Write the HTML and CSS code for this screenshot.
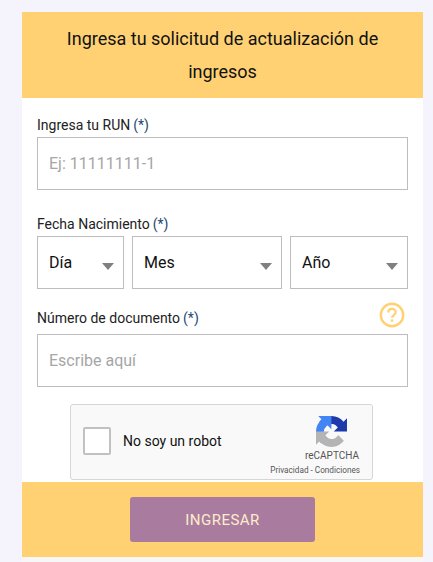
FILE: index.html
```html
<!DOCTYPE html>
<html lang="es">
<head>
    <meta charset="UTF-8">
    <meta name="viewport" content="width=device-width, initial-scale=1.0">
    <title>Solicitud de actualización de ingresos</title>
    <link rel="stylesheet" href="styles.css">
</head>
<body>
    <div class="card">
        <header class="card-header">
            <h1>Ingresa tu solicitud de actualización de ingresos</h1>
        </header>
        <form class="form">
            <div class="field field-run">
                <label for="run">Ingresa tu RUN<span class="req">(*)</span></label>
                <input type="text" id="run" placeholder="Ej: 11111111-1">
            </div>
            <div class="field field-date">
                <label for="dia">Fecha Nacimiento<span class="req">(*)</span></label>
                <div class="date-row">
                    <div class="select select-day">
                        <select id="dia"><option>Día</option></select>
                    </div>
                    <div class="select select-month">
                        <select id="mes"><option>Mes</option></select>
                    </div>
                    <div class="select select-year">
                        <select id="anio"><option>Año</option></select>
                    </div>
                </div>
            </div>
            <div class="field field-doc">
                <div class="label-row">
                    <label for="doc">Número de documento<span class="req">(*)</span></label>
                    <svg class="help" width="26" height="26" viewBox="0 0 26 26">
                        <circle cx="13" cy="13" r="11.2" fill="none" stroke="#ffd173" stroke-width="2.4"/>
                        <path d="M9.2 10.4c0-2.2 1.7-3.6 3.8-3.6s3.8 1.4 3.8 3.3c0 2.6-3.8 2.8-3.8 5.7" fill="none" stroke="#ffd173" stroke-width="2.2"/>
                        <rect x="11.8" y="17.4" width="2.4" height="2.4" fill="#ffd173"/>
                    </svg>
                </div>
                <input type="text" id="doc" placeholder="Escribe aquí">
            </div>
            <div class="captcha">
                <span class="captcha-check"></span>
                <span class="captcha-text">No soy un robot</span>
                <div class="captcha-brand">
                    <svg class="captcha-logo" width="31" height="31" viewBox="0 0 64 64">
                        <path d="M64 31.955l-.033-1.37V4.687l-7.16 7.16C50.948 4.674 42.033.093 32.05.093c-10.4 0-19.622 4.96-25.458 12.64l11.736 11.86a15.55 15.55 0 0 1 4.754-5.334c2.05-1.6 4.952-2.906 8.968-2.906.485 0 .86.057 1.135.163 4.976.393 9.288 3.14 11.828 7.124l-8.307 8.307L64 31.953" fill="#1c3aa9"/>
                        <path d="M31.862 0l-1.37.033H4.594l7.16 7.16C4.58 13.052 0 21.967 0 31.95c0 10.4 4.96 19.622 12.64 25.458l11.86-11.736a15.55 15.55 0 0 1-5.334-4.754c-1.6-2.05-2.906-4.952-2.906-8.968 0-.485.057-.86.163-1.135.393-4.976 3.14-9.288 7.124-11.828l8.307 8.307L31.86 0" fill="#4285f4"/>
                        <path d="M.001 31.955l.033 1.37v25.9l7.16-7.16c5.857 7.173 14.772 11.754 24.755 11.754 10.4 0 19.622-4.96 25.458-12.64l-11.736-11.86a15.55 15.55 0 0 1-4.754 5.334c-2.05 1.6-4.952 2.906-8.968 2.906-.485 0-.86-.057-1.135-.163-4.976-.393-9.288-3.14-11.828-7.124l8.307-8.307c-10.2.1-21.74.1-27.27-.001" fill="#b4b4b4"/>
                    </svg>
                    <span class="captcha-name">reCAPTCHA</span>
                    <span class="captcha-links">Privacidad - Condiciones</span>
                </div>
            </div>
        </form>
        <footer class="card-footer">
            <button type="button" class="button">INGRESAR</button>
        </footer>
        <div class="card-bottom"></div>
    </div>
</body>
</html>
```

FILE: styles.css
```css
* {
    margin: 0;
    padding: 0;
    box-sizing: border-box;
    font-family: 'Roboto', sans-serif;
}
html, body {
    height: 100%;
}
body {
    background-color: #f5f3fb;
    padding: 12px 10px 0 22px;
    overflow: hidden;
}
.card {
    width: 401px;
    background: #fff;
}
.card-header {
    height: 86px;
    background: #ffd173;
    padding: 10px 30px 0;
    text-align: center;
}
h1 {
    font-size: 18px;
    font-weight: 400;
    line-height: 33px;
    color: #111;
}
.form {
    padding: 0 15px;
    height: 384px;
}
.field label {
    display: block;
    font-size: 14px;
    line-height: 16px;
    color: #222;
}
.req {
    margin-left: 3px;
    color: #1d4a73;
}
.field-run {
    padding-top: 19px;
}
.field-run label {
    margin-bottom: 4px;
}
.field-date {
    padding-top: 26px;
}
.field-date label {
    margin-bottom: 4px;
}
.field-doc {
    padding-top: 13px;
}
input {
    display: block;
    width: 100%;
    height: 53px;
    padding: 0 11px;
    border: 1px solid #bdbdbd;
    border-radius: 0;
    outline: none;
    background: #fff;
    font-size: 16px;
    color: #222;
}
input::placeholder {
    color: #a6a6a6;
    opacity: 1;
}
.date-row {
    display: flex;
    gap: 8px;
}
.select {
    position: relative;
    height: 53px;
}
.select::after {
    content: "";
    position: absolute;
    right: 10px;
    top: 27px;
    border-left: 6.5px solid transparent;
    border-right: 6.5px solid transparent;
    border-top: 7px solid #808080;
}
.select-day {
    width: 87px;
}
.select-month {
    width: 150px;
}
.select-year {
    width: 118px;
}
select {
    appearance: none;
    width: 100%;
    height: 100%;
    padding: 0 11px;
    border: 1px solid #bdbdbd;
    border-radius: 0;
    background: #fff;
    font-size: 16px;
    color: #111;
}
.label-row {
    display: flex;
    justify-content: space-between;
    align-items: flex-end;
    padding-right: 3px;
    margin-bottom: 8px;
}
.help {
    display: block;
    margin-bottom: -2px;
}
.captcha {
    display: flex;
    align-items: center;
    width: 303px;
    height: 76px;
    margin: 17px 0 0 33px;
    padding: 0 13px 2px 12px;
    background: #f9f9f9;
    border: 1px solid #d6d6d6;
    border-radius: 3px;
}
.captcha-check {
    width: 28px;
    height: 28px;
    background: #fff;
    border: 2px solid #c1c1c1;
    border-radius: 2px;
}
.captcha-text {
    margin-left: 12px;
    font-size: 14px;
    color: #111;
}
.captcha-brand {
    display: flex;
    flex-direction: column;
    align-items: flex-end;
    margin-left: auto;
    margin-right: -1px;
    padding-top: 8px;
}
.captcha-logo {
    margin-right: 13px;
    margin-bottom: 3px;
}
.captcha-name {
    margin-right: 1px;
    font-size: 10px;
    line-height: 12px;
    color: #555;
}
.captcha-links {
    margin-top: 3px;
    font-size: 8.2px;
    line-height: 10px;
    color: #555;
}
.card-footer {
    display: flex;
    justify-content: center;
    align-items: center;
    height: 75px;
    background: #ffd173;
}
.button {
    width: 185px;
    height: 45px;
    border: none;
    border-radius: 3px;
    background: #a97c9f;
    color: #fdeccb;
    font-size: 15px;
    letter-spacing: 0.5px;
}
.card-bottom {
    height: 5px;
    background: #f7f7f7;
}
```
